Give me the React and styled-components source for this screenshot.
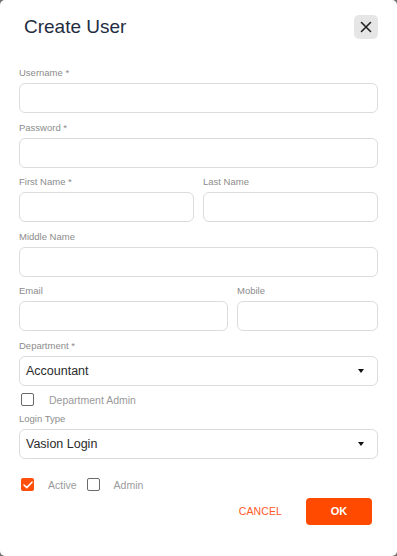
import React from "react";
import styled, { createGlobalStyle } from "styled-components";

const GlobalStyle = createGlobalStyle`
  html, body {
    margin: 0;
    padding: 0;
    background: #6f6f6f;
  }
  * {
    box-sizing: border-box;
  }
`;

const App = () => {
  return (
    <>
      <GlobalStyle />
      <Dialog>
        <Header>
          <Title>Create User</Title>
          <CloseButton aria-label="Close">
            <svg width="12" height="12" viewBox="0 0 12 12">
              <path d="M1.5 1.5 L10.5 10.5 M10.5 1.5 L1.5 10.5" stroke="#222" strokeWidth="1.6" strokeLinecap="round" />
            </svg>
          </CloseButton>
        </Header>

        <Form>
          <Field>
            <Label>Username *</Label>
            <Input />
          </Field>
          <Field>
            <Label>Password *</Label>
            <Input type="password" />
          </Field>
          <Row cols="1fr 1fr">
            <Field>
              <Label>First Name *</Label>
              <Input />
            </Field>
            <Field>
              <Label>Last Name</Label>
              <Input />
            </Field>
          </Row>
          <Field>
            <Label>Middle Name</Label>
            <Input />
          </Field>
          <Row cols="209px 1fr">
            <Field>
              <Label>Email</Label>
              <Input />
            </Field>
            <Field>
              <Label>Mobile</Label>
              <Input />
            </Field>
          </Row>
          <Field>
            <Label>Department *</Label>
            <Select>
              <span>Accountant</span>
              <Caret />
            </Select>
          </Field>
          <CheckRow $top={-0.6}>
            <Check>
              <Box />
              <CheckText $pad={15}>Department Admin</CheckText>
            </Check>
          </CheckRow>
          <Field $top={-2.6}>
            <Label>Login Type</Label>
            <Select>
              <span>Vasion Login</span>
              <Caret />
            </Select>
          </Field>
          <CheckRow $top={11.4}>
            <Check>
              <Box $checked>
                <svg width="10" height="8" viewBox="0 0 10 8">
                  <path d="M1 4 L3.8 6.6 L9 1.2" fill="none" stroke="#fff" strokeWidth="1.6" strokeLinecap="round" strokeLinejoin="round" />
                </svg>
              </Box>
              <CheckText $pad={14}>Active</CheckText>
            </Check>
            <Check>
              <Box />
              <CheckText $pad={14}>Admin</CheckText>
            </Check>
          </CheckRow>
        </Form>

        <Footer>
          <TextButton>CANCEL</TextButton>
          <PrimaryButton>OK</PrimaryButton>
        </Footer>
      </Dialog>
    </>
  );
};

export default App;

const Dialog = styled.div`
  width: 397px;
  height: 556px;
  background: #fff;
  border-radius: 5px;
  font-family: "Liberation Sans", Arial, sans-serif;
  display: flex;
  flex-direction: column;
`;

const Header = styled.div`
  display: flex;
  justify-content: space-between;
  align-items: center;
  padding: 15px 19px 0 24px;
  height: 24px;
  box-sizing: content-box;
`;

const Title = styled.h2`
  margin: 0;
  font-size: 19px;
  font-weight: 400;
  color: #1f2d42;
`;

const CloseButton = styled.button`
  width: 24px;
  height: 24px;
  border: none;
  border-radius: 5px;
  background: #e6e6e6;
  display: flex;
  align-items: center;
  justify-content: center;
  padding: 0;
`;

const Form = styled.div`
  padding: 27px 19px 0 19px;
  display: flex;
  flex-direction: column;
  gap: 7.6px;
`;

const Field = styled.div`
  display: flex;
  flex-direction: column;
  margin-top: ${(p) => p.$top || 0}px;
`;

const Row = styled.div`
  display: grid;
  grid-template-columns: ${(p) => p.cols};
  column-gap: 9px;
`;

const Label = styled.label`
  font-size: 9.5px;
  line-height: 14px;
  height: 14px;
  color: #8c8c8c;
  margin-bottom: 3px;
`;

const Input = styled.input`
  height: 30px;
  width: 100%;
  border: 1px solid #dcdcdc;
  border-radius: 6px;
  background: #fff;
  outline: none;
`;

const Select = styled.div`
  height: 30px;
  border: 1px solid #dcdcdc;
  border-radius: 6px;
  display: flex;
  align-items: center;
  justify-content: space-between;
  padding: 0 13px 0 6px;
  font-size: 12.5px;
  color: #2b2b2b;
`;

const Caret = styled.span`
  width: 0;
  height: 0;
  border-left: 3.5px solid transparent;
  border-right: 3.5px solid transparent;
  border-top: 4px solid #111;
`;

const CheckRow = styled.div`
  display: flex;
  align-items: center;
  gap: 10px;
  margin-top: ${(p) => p.$top}px;
  padding-left: 2px;
  height: 14px;
`;

const Check = styled.div`
  display: flex;
  align-items: center;
`;

const Box = styled.span`
  width: 13px;
  height: 13px;
  border-radius: 2px;
  border: ${(p) => (p.$checked ? "none" : "1.5px solid #6a6a6a")};
  background: ${(p) => (p.$checked ? "#ff4f0a" : "#fff")};
  display: flex;
  align-items: center;
  justify-content: center;
`;

const CheckText = styled.span`
  padding-left: ${(p) => p.$pad}px;
  font-size: 10.5px;
  color: #9a9a9a;
`;

const Footer = styled.div`
  display: flex;
  justify-content: flex-end;
  align-items: center;
  gap: 24px;
  padding: 6px 25px 0 0;
`;

const TextButton = styled.button`
  border: none;
  background: none;
  padding: 0;
  font-family: "Liberation Sans", Arial, sans-serif;
  font-size: 10.5px;
  color: #ff5a1f;
  letter-spacing: 0.1px;
`;

const PrimaryButton = styled.button`
  width: 66px;
  height: 27px;
  border: none;
  border-radius: 4px;
  background: #ff4a00;
  color: #fff;
  font-family: "Liberation Sans", Arial, sans-serif;
  font-size: 11px;
  font-weight: 700;
`;
